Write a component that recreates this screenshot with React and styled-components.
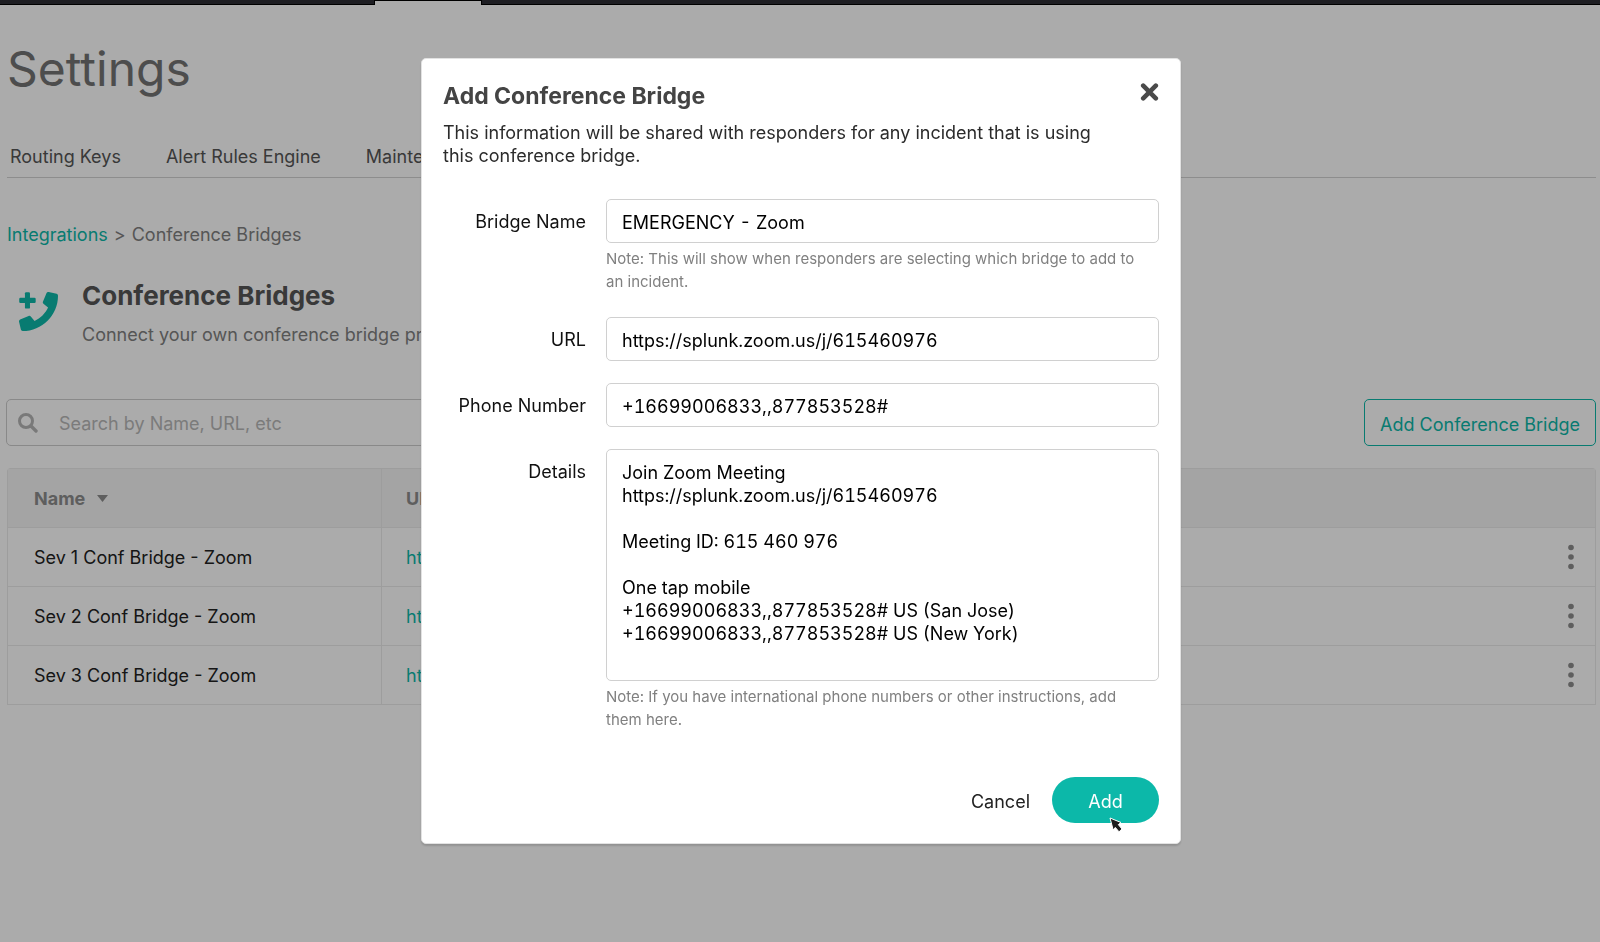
import React, { useState } from 'react';
import styled, { createGlobalStyle } from 'styled-components';

const teal = '#0cb8a9';

const GlobalStyle = createGlobalStyle`
  *, *::before, *::after { box-sizing: border-box; }
  html, body { margin: 0; background: #fff; }
  body, input, textarea, button {
    font-family: Inter, "Liberation Sans", sans-serif;
    font-size: 18px;
    line-height: 23px;
  }
  h1, h2, p { margin: 0; }
`;

const Page = styled.div`
  min-height: 100vh;
  display: flex;
  flex-direction: column;
  color: #444;
`;

const TopBar = styled.div`
  height: 5px;
  padding: 1px 0 0 375px;
  background: #2d2e35;
  border-bottom: 1px solid #000;
`;

const ActiveTab = styled.div`
  width: 106px;
  height: 4px;
  background: #fff;
  outline: 1px solid #000;
  clip-path: inset(-1px -1px 0 -1px);
`;

const Content = styled.main`
  display: flex;
  flex-direction: column;
  padding: 34px 4px 0 7px;
`;

const PageTitle = styled.h1`
  font-size: 48px;
  line-height: 60px;
  font-weight: 400;
  color: #737373;
`;

const SectionNav = styled.nav`
  display: flex;
  gap: 45px;
  margin-top: 46px;
  padding: 0 3px 9px;
  border-bottom: 1px solid #d2d2d2;
  white-space: nowrap;
`;

const NavLink = styled.a`
  color: #555;
  text-decoration: none;
`;

const Breadcrumb = styled.nav`
  display: flex;
  gap: 6px;
  margin-top: 45px;
  color: #808080;
`;

const TealLink = styled.a`
  color: ${teal};
  text-decoration: none;
`;

const Intro = styled.header`
  display: flex;
  gap: 24px;
  padding: 34px 0 0 12px;
`;

const PhoneIcon = styled.svg`
  width: 39px;
  height: 39px;
  margin-top: 12px;
  flex: none;
`;

const SectionTitle = styled.h2`
  font-size: 26px;
  line-height: 32px;
  font-weight: 700;
  color: #555;
`;

const SectionText = styled.p`
  margin-top: 11px;
  color: #808080;
`;

const Toolbar = styled.div`
  display: flex;
  justify-content: space-between;
  margin: 53px 0 22px -1px;
`;

const SearchBox = styled.div`
  display: flex;
  align-items: center;
  gap: 21px;
  flex: 0 1 740px;
  height: 47px;
  padding: 1px 11px 0;
  border: 1px solid #ccc;
  border-radius: 5px;
`;

const SearchInput = styled.input`
  flex: 1;
  min-width: 0;
  padding: 0;
  border: 0;
  outline: 0;
  background: none;
  &::placeholder { color: #b8b8b8; opacity: 1; }
`;

const OutlineButton = styled.button`
  height: 47px;
  padding: 3px 15px 0;
  border: 1px solid ${teal};
  border-radius: 5px;
  background: none;
  color: ${teal};
`;

const BridgeTable = styled.table`
  width: 100%;
  table-layout: fixed;
  border-spacing: 0;
  border: 1px solid #eaeaea;
  border-width: 1px 1px 0;
  border-radius: 4px 4px 0 0;
`;

const cell = `
  height: 59px;
  padding: 0 24px 0 26px;
  text-align: left;
  border-bottom: 1px solid #eaeaea;
`;

const HeadCell = styled.th`
  ${cell}
  width: ${p => p.$width || 'auto'};
  padding-left: ${p => (p.$divided ? 24 : 26)}px;
  background: #f5f5f5;
  color: #8c8c8c;
  font-weight: 700;
  border-left: ${p => (p.$divided ? '1px solid #eaeaea' : '0')};
`;

const Cell = styled.td`
  ${cell}
  padding-left: ${p => (p.$divided ? 24 : 26)}px;
  color: #222;
  border-left: ${p => (p.$divided ? '1px solid #eaeaea' : '0')};
`;

const MenuCell = styled(Cell)`
  padding: 0 18px 0 0;
  text-align: right;
`;

const SortButton = styled.button`
  display: flex;
  align-items: center;
  gap: 12px;
  padding: 0;
  border: 0;
  background: none;
  color: inherit;
  font-weight: inherit;
`;

const MenuButton = styled.button`
  display: inline-flex;
  width: 12px;
  padding: 0;
  justify-content: center;
  vertical-align: middle;
  border: 0;
  background: none;
`;

const Overlay = styled.div`
  position: fixed;
  inset: 0;
  display: flex;
  justify-content: center;
  align-items: flex-start;
  padding: 58px 0 20px 2px;
  overflow: auto;
  background: rgba(0, 0, 0, 0.33);
`;

const Dialog = styled.form`
  width: 100%;
  max-width: 760px;
  padding: 23px 21px 20px;
  background: #fff;
  border: 1px solid #e2e2e2;
  border-radius: 5px;
  box-shadow: 0 2px 2px rgba(0, 0, 0, 0.15);
  color: #111;
`;

const DialogHeader = styled.header`
  display: flex;
  justify-content: space-between;
  align-items: flex-start;
`;

const DialogTitle = styled.h2`
  font-size: 23px;
  line-height: 28px;
  font-weight: 700;
  color: #444;
`;

const DialogText = styled.p`
  max-width: 670px;
  margin-top: 11px;
  color: #2b2b2b;
`;

const CloseButton = styled.button`
  display: flex;
  padding: 0;
  border: 0;
  background: none;
`;

const Fields = styled.div`
  display: grid;
  gap: 22px;
  margin-top: 32px;
`;

const FieldRow = styled.div`
  display: grid;
  grid-template-columns: 143px 1fr;
  column-gap: 20px;
`;

const FieldLabel = styled.label`
  padding-top: 11px;
  text-align: right;
`;

const FieldBody = styled.div`
  display: flex;
  flex-direction: column;
`;

const TextInput = styled.input`
  width: 100%;
  height: 44px;
  padding: 2px 15px 0;
  border: 1px solid #d0d0d0;
  border-radius: 5px;
  color: #000;
  font-variant-numeric: tabular-nums;
`;

const TextArea = styled.textarea`
  width: 100%;
  height: 232px;
  padding: 11px 15px;
  border: 1px solid #d0d0d0;
  border-radius: 5px;
  color: #000;
  font-variant-numeric: tabular-nums;
  resize: none;
`;

const Hint = styled.p`
  max-width: 545px;
  margin: 4px 0 2px;
  font-size: 15px;
  color: #808080;
`;

const Actions = styled.footer`
  display: flex;
  justify-content: flex-end;
  gap: 22px;
  margin-top: 44px;
`;

const TextButton = styled.button`
  padding: 2px 0 0;
  border: 0;
  background: none;
  color: #222;
`;

const PrimaryButton = styled.button`
  position: relative;
  width: 107px;
  height: 46px;
  padding: 2px 0 0;
  border: 0;
  border-radius: 23px;
  background: ${teal};
  color: #fff;
`;

const Pointer = styled.svg`
  position: absolute;
  left: 57px;
  top: 40px;
  width: 14px;
  height: 17px;
`;

const details = `Join Zoom Meeting
https://splunk.zoom.us/j/615460976

Meeting ID: 615 460 976

One tap mobile
+16699006833,,877853528# US (San Jose)
+16699006833,,877853528# US (New York)`;

const bridges = ['Sev 1 Conf Bridge - Zoom', 'Sev 2 Conf Bridge - Zoom', 'Sev 3 Conf Bridge - Zoom'];

function Field({ id, label, hint, multiline, initial }) {
  const [value, setValue] = useState(initial);
  const Control = multiline ? TextArea : TextInput;
  return (
    <FieldRow>
      <FieldLabel htmlFor={id}>{label}</FieldLabel>
      <FieldBody>
        <Control id={id} value={value} spellCheck={false} onChange={e => setValue(e.target.value)} />
        {hint && <Hint>{hint}</Hint>}
      </FieldBody>
    </FieldRow>
  );
}

function BridgeDialog() {
  return (
    <Overlay>
      <Dialog role="dialog" aria-modal="true" aria-labelledby="dialog-title" onSubmit={e => e.preventDefault()}>
        <DialogHeader>
          <DialogTitle id="dialog-title">Add Conference Bridge</DialogTitle>
          <CloseButton type="button" aria-label="Close">
            <svg width="19" height="22" viewBox="0 0 19 22">
              <path d="M3.2 3.700 15.8 16.300M15.8 3.700 3.2 16.300" stroke="#4a4a4a" strokeWidth="4.6" strokeLinecap="round" />
            </svg>
          </CloseButton>
        </DialogHeader>
        <DialogText>
          This information will be shared with responders for any incident that is using this conference bridge.
        </DialogText>
        <Fields>
          <Field
            id="bridge-name"
            label="Bridge Name"
            initial="EMERGENCY - Zoom"
            hint="Note: This will show when responders are selecting which bridge to add to an incident."
          />
          <Field id="bridge-url" label="URL" initial="https://splunk.zoom.us/j/615460976" />
          <Field id="bridge-phone" label="Phone Number" initial="+16699006833,,877853528#" />
          <Field
            id="bridge-details"
            label="Details"
            multiline
            initial={details}
            hint="Note: If you have international phone numbers or other instructions, add them here."
          />
        </Fields>
        <Actions>
          <TextButton type="button">Cancel</TextButton>
          <PrimaryButton type="submit">
            Add
            <Pointer viewBox="0 0 14 17" aria-hidden="true">
              <path d="M1 1 12 5.5 9.300 7.600 13 12 10 14.800 6.300 10.400 4.200 13Z" fill="#1c1c1c" stroke="#fff" strokeWidth="1" strokeLinejoin="round" />
            </Pointer>
          </PrimaryButton>
        </Actions>
      </Dialog>
    </Overlay>
  );
}

export default function App() {
  return (
    <>
      <GlobalStyle />
      <Page>
        <TopBar>
          <ActiveTab />
        </TopBar>
        <Content>
          <PageTitle>Settings</PageTitle>
          <SectionNav>
            <NavLink href="#routing">Routing Keys</NavLink>
            <NavLink href="#rules">Alert Rules Engine</NavLink>
            <NavLink href="#maintenance">Mainte</NavLink>
          </SectionNav>
          <Breadcrumb>
            <TealLink href="#integrations">Integrations</TealLink>
            <span>&gt;</span>
            <span>Conference Bridges</span>
          </Breadcrumb>
          <Intro>
            <PhoneIcon viewBox="0 0 512 512" fill={teal} aria-hidden="true">
              <path d="M493.4 24.6l-104-24c-11.3-2.6-22.9 3.3-27.5 13.9l-48 112c-4.2 9.8-1.4 21.3 6.9 28l60.6 49.6c-36 76.7-98.9 140.5-177.2 177.2l-49.6-60.6c-6.8-8.3-18.2-11.1-28-6.9l-112 48C3.9 366.5-2 378.1.6 389.4l24 104C27.1 504.2 36.7 512 48 512c256.1 0 464-207.5 464-464 0-11.2-7.7-20.9-18.6-23.400z" />
              <rect x="78" y="2" width="66" height="216" rx="16" />
              <rect x="3" y="77" width="216" height="66" rx="16" />
            </PhoneIcon>
            <div>
              <SectionTitle>Conference Bridges</SectionTitle>
              <SectionText>Connect your own conference bridge pr</SectionText>
            </div>
          </Intro>
          <Toolbar>
            <SearchBox>
              <svg width="20" height="20" viewBox="0 0 20 20" aria-hidden="true">
                <circle cx="8" cy="8" r="6.500" fill="none" stroke="#b5b5b5" strokeWidth="3" />
                <path d="m13 13 5 5" stroke="#b5b5b5" strokeWidth="3.400" strokeLinecap="round" />
              </svg>
              <SearchInput type="search" aria-label="Search bridges" placeholder="Search by Name, URL, etc" />
            </SearchBox>
            <OutlineButton type="button">Add Conference Bridge</OutlineButton>
          </Toolbar>
          <BridgeTable>
            <thead>
              <tr>
                <HeadCell $width="373px">
                  <SortButton type="button">
                    Name
                    <svg width="11" height="7" viewBox="0 0 11 7" aria-hidden="true">
                      <path d="M0 0h11L5.500 7Z" fill="#8c8c8c" />
                    </svg>
                  </SortButton>
                </HeadCell>
                <HeadCell $divided>URL</HeadCell>
                <HeadCell $width="60px" aria-label="Actions" />
              </tr>
            </thead>
            <tbody>
              {bridges.map(name => (
                <tr key={name}>
                  <Cell>{name}</Cell>
                  <Cell $divided>
                    <TealLink href="#bridge">ht</TealLink>
                  </Cell>
                  <MenuCell>
                    <MenuButton type="button" aria-label={`Options for ${name}`}>
                      <svg width="6" height="26" viewBox="0 0 6 26">
                        <g fill="#8c8c8c">
                          <circle cx="3" cy="3.500" r="2.800" />
                          <circle cx="3" cy="13" r="2.800" />
                          <circle cx="3" cy="22.500" r="2.800" />
                        </g>
                      </svg>
                    </MenuButton>
                  </MenuCell>
                </tr>
              ))}
            </tbody>
          </BridgeTable>
        </Content>
      </Page>
      <BridgeDialog />
    </>
  );
}
